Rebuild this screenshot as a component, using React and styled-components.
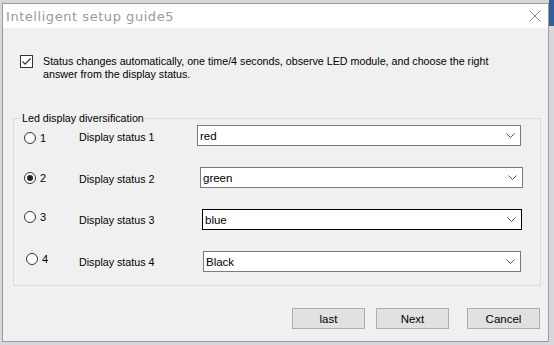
import styled, { createGlobalStyle } from "styled-components";

const GlobalStyle = createGlobalStyle`
  html, body {
    margin: 0;
    padding: 0;
    background: #d6d8dc;
    font-family: "Liberation Sans", Arial, sans-serif;
  }
`;

const Screen = styled.div`
  width: 554px;
  height: 345px;
  padding: 3px 5px 0 2px;
  box-sizing: border-box;
  overflow: hidden;
  background: linear-gradient(#2f5ea0, #2f5ea0) right top / 5px 26px no-repeat, #d6d8dc;
`;

const Window = styled.div`
  width: 547px;
  height: 339px;
  border: 1px solid #9a9a9a;
  box-sizing: border-box;
  background: #f0f0f0;
  display: flex;
  flex-direction: column;
`;

const TitleBar = styled.div`
  height: 24px;
  background: #ffffff;
  display: flex;
  align-items: center;
  justify-content: space-between;
  padding: 0 7px 0 3px;
`;

const Title = styled.span`
  font-family: "DejaVu Sans", sans-serif;
  font-size: 13px;
  letter-spacing: 0.55px;
  color: #9a9a9a;
`;

const CloseButton = styled.span`
  width: 12px;
  height: 12px;
  display: flex;
`;

const Body = styled.div`
  flex: 1;
  display: flex;
  flex-direction: column;
  padding: 27px 7px 0 10px;
  font-size: 10.7px;
  color: #000;
`;

const CheckRow = styled.label`
  display: flex;
  align-items: flex-start;
  gap: 10px;
  padding-left: 7px;
  line-height: 12.5px;
`;

const CheckBox = styled.span`
  width: 13px;
  height: 13px;
  flex: none;
  box-sizing: border-box;
  border: 1px solid #333;
  background: #fff;
  display: flex;
  align-items: center;
  justify-content: center;
`;

const CheckText = styled.span`
  width: 460px;
`;

const Group = styled.fieldset`
  margin: 32px 0 0 0;
  padding: 1px 0 13px 0;
  border: 1px solid #dcdcdc;
  display: flex;
  flex-direction: column;
  gap: 21px;
`;

const Legend = styled.legend`
  margin-left: 7px;
  padding: 0 1px;
  font-size: 10.7px;
`;

const Row = styled.div`
  height: 21px;
  display: flex;
  align-items: center;
`;

const RadioLabel = styled.span`
  width: 65px;
  box-sizing: border-box;
  flex: none;
  display: flex;
  align-items: center;
  gap: 4px;
  padding-left: ${(p) => p.$indent}px;
  margin-top: ${(p) => p.$dy}px;
  font-size: 11px;
`;

const Radio = styled.span`
  width: 12px;
  height: 12px;
  box-sizing: border-box;
  border-radius: 50%;
  border: 1px solid #333;
  background: #fff;
  display: flex;
  align-items: center;
  justify-content: center;

  &::after {
    content: "";
    width: 6px;
    height: 6px;
    border-radius: 50%;
    background: ${(p) => (p.$checked ? "#222" : "transparent")};
  }
`;

const StatusText = styled.span`
  width: ${(p) => p.$w}px;
  flex: none;
  margin-top: ${(p) => p.$dy}px;
`;

const Select = styled.div`
  width: ${(p) => p.$w}px;
  height: 21px;
  box-sizing: border-box;
  border: 1px solid ${(p) => (p.$focus ? "#000" : "#7a7a7a")};
  background: #fff;
  display: flex;
  align-items: center;
  justify-content: space-between;
  padding: 0 5px 0 2px;
  font-size: 11.5px;
`;

const Footer = styled.div`
  display: flex;
  justify-content: flex-end;
  padding: 22px 1px 0 0;
`;

const Button = styled.button`
  width: 73px;
  height: 21px;
  margin-left: ${(p) => p.$gap}px;
  border: 1px solid #adadad;
  background: #e1e1e1;
  font-family: "Liberation Sans", Arial, sans-serif;
  font-size: 11.5px;
  color: #000;
  padding: 0;
`;

const Chevron = () => (
  <svg width="9" height="5" viewBox="0 0 9 5">
    <path d="M0.5 0.5 L4.5 4.5 L8.5 0.5" fill="none" stroke="#555" strokeWidth="1" />
  </svg>
);

const rows = [
  { n: 1, value: "red", indent: 10, dy: 4, textDy: 3, pre: 0, selW: 324 },
  { n: 2, value: "green", indent: 10, dy: 1, textDy: 3, pre: 3, selW: 323, checked: true },
  { n: 3, value: "blue", indent: 10, dy: -5, textDy: 0, pre: 5, selW: 320, focus: true },
  { n: 4, value: "Black", indent: 12, dy: -6, textDy: 0, pre: 6, selW: 318 },
];

export default function App() {
  return (
    <Screen>
      <GlobalStyle />
      <Window>
        <TitleBar>
          <Title>Intelligent setup guide5</Title>
          <CloseButton>
            <svg width="12" height="12" viewBox="0 0 12 12">
              <path d="M0.5 0.5 L11.5 11.5 M11.5 0.5 L0.5 11.5" stroke="#8a8a8a" strokeWidth="1" />
            </svg>
          </CloseButton>
        </TitleBar>
        <Body>
          <CheckRow>
            <CheckBox>
              <svg width="11" height="11" viewBox="0 0 11 11">
                <path d="M1.5 5.5 L4.2 8.2 L9.5 2.5" fill="none" stroke="#333" strokeWidth="1.2" />
              </svg>
            </CheckBox>
            <CheckText>
              Status changes automatically, one time/4 seconds, observe LED module, and choose the right
              answer from the display status.
            </CheckText>
          </CheckRow>
          <Group>
            <Legend>Led display diversification</Legend>
            {rows.map((r) => (
              <Row key={r.n}>
                <RadioLabel $indent={r.indent} $dy={r.dy}>
                  <Radio $checked={r.checked} />
                  {r.n}
                </RadioLabel>
                <StatusText $w={118 + r.pre} $dy={r.textDy}>
                  Display status {r.n}
                </StatusText>
                <Select $w={r.selW} $focus={r.focus}>
                  {r.value}
                  <Chevron />
                </Select>
              </Row>
            ))}
          </Group>
          <Footer>
            <Button $gap={0}>last</Button>
            <Button $gap={11}>Next</Button>
            <Button $gap={18}>Cancel</Button>
          </Footer>
        </Body>
      </Window>
    </Screen>
  );
}
